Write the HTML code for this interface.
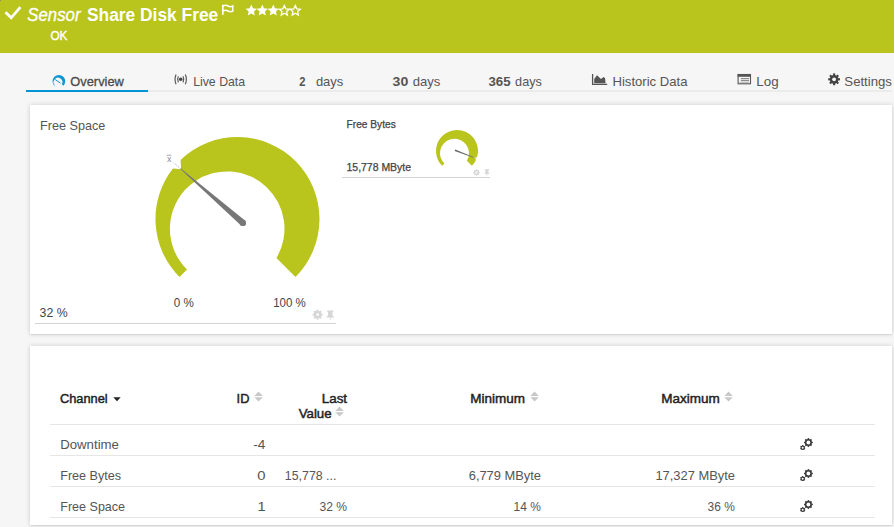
<!DOCTYPE html>
<html><head><meta charset="utf-8"><style>
html,body{margin:0;padding:0;}
body{width:894px;height:527px;overflow:hidden;position:relative;background:#f6f6f6;font-family:"Liberation Sans",sans-serif;}
.t{position:absolute;white-space:nowrap;}
.card{position:absolute;background:#fff;box-shadow:0 0 5px rgba(0,0,0,0.17),0 1px 1px rgba(0,0,0,0.06);}
</style></head><body>
<div style="position:absolute;left:0;top:0;width:894px;height:53px;background:#b9c41c"></div>
<div style="position:absolute;left:0;top:0;width:1px;height:1px;background:#8a8f70"></div>
<svg style="position:absolute;left:0;top:0" width="40" height="30"><path d="M6.5 13.2 L11.2 17.8 L19.5 8.2" fill="none" stroke="#fff" stroke-width="2.8" stroke-linecap="square"/></svg>
<div class="t" style="top:5.76px;font-size:18.00px;line-height:18.00px;left:27px;transform:translateX(0.32px) scaleX(0.9330);transform-origin:0 0;color:#fff;font-style:italic;-webkit-text-stroke:0.3px #fff;">Sensor</div>
<div class="t" style="top:5.76px;font-size:18.00px;line-height:18.00px;left:86px;transform:translateX(0.95px) scaleX(0.9647);transform-origin:0 0;color:#fff;font-weight:bold;">Share Disk Free</div>
<div class="t" style="top:29.82px;font-size:12.50px;line-height:12.50px;left:50px;transform:translateX(0.40px) scaleX(0.9429);transform-origin:0 0;color:#fff;-webkit-text-stroke:0.4px #fff;">OK</div>
<svg style="position:absolute;left:220px;top:3px" width="16" height="14"><path d="M2.8 1.8 V11.8" stroke="#fff" stroke-width="1.7"/><path d="M3 3 Q5.5 1.6 8 3 T12.8 3 V8 Q10.3 9.4 8 8 T3 8" fill="none" stroke="#fff" stroke-width="1.5"/></svg>
<svg style="position:absolute;left:244px;top:2px" width="60" height="16"><polygon points="7.30,2.60 8.95,6.33 13.01,6.75 9.96,9.47 10.83,13.45 7.30,11.40 3.77,13.45 4.64,9.47 1.59,6.75 5.65,6.33" fill="#fff"/><polygon points="18.30,2.60 19.95,6.33 24.01,6.75 20.96,9.47 21.83,13.45 18.30,11.40 14.77,13.45 15.64,9.47 12.59,6.75 16.65,6.33" fill="#fff"/><polygon points="29.30,2.60 30.95,6.33 35.01,6.75 31.96,9.47 32.83,13.45 29.30,11.40 25.77,13.45 26.64,9.47 23.59,6.75 27.65,6.33" fill="#fff"/><polygon points="40.30,3.50 41.77,6.78 45.34,7.16 42.68,9.57 43.42,13.09 40.30,11.30 37.18,13.09 37.92,9.57 35.26,7.16 38.83,6.78" fill="none" stroke="#fff" stroke-width="1.3" stroke-linejoin="miter"/><polygon points="51.30,3.50 52.77,6.78 56.34,7.16 53.68,9.57 54.42,13.09 51.30,11.30 48.18,13.09 48.92,9.57 46.26,7.16 49.83,6.78" fill="none" stroke="#fff" stroke-width="1.3" stroke-linejoin="miter"/></svg>
<div style="position:absolute;left:26px;top:90px;width:866px;height:2px;background:#ebebeb"></div>
<div style="position:absolute;left:26px;top:90px;width:122px;height:2px;background:#0096d6"></div>
<svg style="position:absolute;left:0;top:0" width="80" height="95"><path d="M54.45 85.75 A6.30 6.30 0 1 1 63.35 85.75 L61.88 84.28 A4.40 4.40 0 1 0 54.89 85.31 Z" fill="#0d96d4"/><path d="M55.3 79.6 L60.5 83.2" stroke="#0d96d4" stroke-width="1.0"/></svg>
<div class="t" style="top:74.60px;font-size:13.00px;line-height:13.00px;left:70px;transform:translateX(0.35px) scaleX(0.9864);transform-origin:0 0;color:#4a4a4a;-webkit-text-stroke:0.3px #4a4a4a;">Overview</div>
<svg style="position:absolute;left:168px;top:70px" width="24" height="20"><circle cx="12.7" cy="9.3" r="1.8" fill="#444"/><path d="M10.4 6.2 Q8.7 9.3 10.4 12.4 M15 6.2 Q16.7 9.3 15 12.4 M8.1 4.4 Q5.9 9.3 8.1 14.2 M17.3 4.4 Q19.5 9.3 17.3 14.2" fill="none" stroke="#555" stroke-width="1.15"/></svg>
<div class="t" style="top:74.60px;font-size:13.00px;line-height:13.00px;left:193px;transform:translateX(0.13px) scaleX(0.9467);transform-origin:0 0;color:#555;">Live Data</div>
<div class="t" style="top:74.60px;font-size:13.00px;line-height:13.00px;left:299px;transform:translateX(0.17px) scaleX(0.8639);transform-origin:0 0;color:#555;font-weight:bold;">2</div>
<div class="t" style="top:74.60px;font-size:13.00px;line-height:13.00px;left:315px;transform:translateX(0.89px) scaleX(0.9984);transform-origin:0 0;color:#555;">days</div>
<div class="t" style="top:74.60px;font-size:13.00px;line-height:13.00px;left:392px;transform:translateX(0.58px) scaleX(1.0832);transform-origin:0 0;color:#555;font-weight:bold;">30</div>
<div class="t" style="top:74.60px;font-size:13.00px;line-height:13.00px;left:412px;transform:translateX(0.69px) scaleX(1.0060);transform-origin:0 0;color:#555;">days</div>
<div class="t" style="top:74.60px;font-size:13.00px;line-height:13.00px;left:488px;transform:translateX(0.42px) scaleX(1.0217);transform-origin:0 0;color:#555;font-weight:bold;">365</div>
<div class="t" style="top:74.60px;font-size:13.00px;line-height:13.00px;left:515px;transform:translateX(0.11px) scaleX(0.9721);transform-origin:0 0;color:#555;">days</div>
<svg style="position:absolute;left:590px;top:73px" width="18" height="14"><path d="M2.6 1 V11.4 H17.2" fill="none" stroke="#555" stroke-width="1.3"/><path d="M4.2 10.2 V6 L7 2.2 L11 6 L13.5 4 L15 5 L15.6 10.2 Z" fill="#555"/></svg>
<div class="t" style="top:74.60px;font-size:13.00px;line-height:13.00px;left:612px;transform:translateX(0.48px) scaleX(1.0073);transform-origin:0 0;color:#555;">Historic Data</div>
<svg style="position:absolute;left:736px;top:73px" width="16" height="13"><rect x="2.1" y="1.5" width="12.4" height="9.3" fill="none" stroke="#555" stroke-width="1.1"/><rect x="1.6" y="1" width="13.4" height="2.8" fill="#555"/><path d="M4.8 5.7 H13 M4.8 7.7 H13" stroke="#666" stroke-width="0.9"/><path d="M3.5 9.5 H13" stroke="#bbb" stroke-width="0.9"/></svg>
<div class="t" style="top:74.60px;font-size:13.00px;line-height:13.00px;left:756px;transform:translateX(0.26px) scaleX(1.0297);transform-origin:0 0;color:#555;">Log</div>
<svg style="position:absolute;left:826px;top:72px" width="16" height="16"><circle cx="8.10" cy="7.30" r="4.40" fill="#444"/><rect x="7.04" y="1.40" width="2.12" height="11.80" fill="#444" transform="rotate(0.0 8.10 7.30)"/><rect x="7.04" y="1.40" width="2.12" height="11.80" fill="#444" transform="rotate(45.0 8.10 7.30)"/><rect x="7.04" y="1.40" width="2.12" height="11.80" fill="#444" transform="rotate(90.0 8.10 7.30)"/><rect x="7.04" y="1.40" width="2.12" height="11.80" fill="#444" transform="rotate(135.0 8.10 7.30)"/><circle cx="8.10" cy="7.30" r="1.90" fill="#f6f6f6"/></svg>
<div class="t" style="top:74.60px;font-size:13.00px;line-height:13.00px;left:844px;transform:translateX(0.34px) scaleX(1.0135);transform-origin:0 0;color:#555;">Settings</div>
<div class="card" style="left:30px;top:105px;width:862px;height:229px"></div>
<div class="t" style="top:119.20px;font-size:13.00px;line-height:13.00px;left:40px;transform:translateX(0.01px) scaleX(0.9714);transform-origin:0 0;color:#555;">Free Space</div>
<svg style="position:absolute;left:0;top:0" width="894" height="527"><path d="M179.52 276.98 A82.00 82.00 0 0 1 172.93 168.45 L181.03 169.22 L194.85 181.40 A57.30 57.30 0 0 0 186.98 269.52 Z" fill="#b9c41c"/><path d="M180.61 159.94 A82.00 82.00 0 0 1 295.48 276.98 L276.46 257.96 A57.30 57.30 0 0 0 194.85 181.40 L181.03 169.22 Z" fill="#b9c41c"/><path d="M180.91 169.11 L173.50 162.50" stroke="#999" stroke-width="0.8" stroke-dasharray="1.2 1.2"/><path d="M180.37 169.06 L240.80 225.32 L245.00 220.48 L180.83 168.54 Z" fill="#777"/><circle cx="242.90" cy="222.90" r="3.20" fill="#777"/><text x="166.9" y="162.2" font-size="9" fill="#8a8a9a" font-family="Liberation Sans">x</text><path d="M166.6 155.2 H171.4" stroke="#a0a0a8" stroke-width="0.9"/><path d="M442.15 165.85 A21.00 21.00 0 1 1 477.15 156.91 L475.01 157.87 L468.82 155.50 A14.50 14.50 0 1 0 444.40 163.60 Z" fill="#b9c41c"/><path d="M475.97 160.00 A21.00 21.00 0 0 1 471.85 165.85 L466.83 160.83 A14.50 14.50 0 0 0 468.82 155.50 L475.01 157.87 Z" fill="#b9c41c"/><path d="M473.77 157.71 L473.98 157.15 L455.21 149.52 L454.68 150.92 Z" fill="#666"/><path d="M473.88 157.43 L477.02 158.63" stroke="#aaa" stroke-width="0.6" stroke-dasharray="0.8 0.8"/></svg>
<div class="t" style="top:305.90px;font-size:13.00px;line-height:13.00px;left:39px;transform:translateX(0.60px) scaleX(0.9455);transform-origin:0 0;color:#444;">32 %</div>
<div class="t" style="top:296.64px;font-size:12.00px;line-height:12.00px;left:173px;transform:translateX(0.78px) scaleX(0.9707);transform-origin:0 0;color:#444;">0 %</div>
<div class="t" style="top:296.64px;font-size:12.00px;line-height:12.00px;left:273px;transform:translateX(0.18px) scaleX(0.9591);transform-origin:0 0;color:#444;">100 %</div>
<div style="position:absolute;left:35px;top:323px;width:301px;height:1px;background:#d4d4d4"></div>
<svg style="position:absolute;left:311px;top:308px" width="14" height="14"><circle cx="6.60" cy="6.60" r="3.90" fill="#d6d6d6"/><rect x="5.65" y="1.60" width="1.90" height="10.00" fill="#d6d6d6" transform="rotate(0.0 6.60 6.60)"/><rect x="5.65" y="1.60" width="1.90" height="10.00" fill="#d6d6d6" transform="rotate(45.0 6.60 6.60)"/><rect x="5.65" y="1.60" width="1.90" height="10.00" fill="#d6d6d6" transform="rotate(90.0 6.60 6.60)"/><rect x="5.65" y="1.60" width="1.90" height="10.00" fill="#d6d6d6" transform="rotate(135.0 6.60 6.60)"/><circle cx="6.60" cy="6.60" r="1.30" fill="#fff"/></svg>
<svg style="position:absolute;left:325.60px;top:309.60px" width="8.50" height="10.20" viewBox="0 0 10 12"><path d="M1.3 0.6 H8.7 V2.2 H7.6 V6.4 L9.4 7.9 V8.7 H0.6 V7.9 L2.4 6.4 V2.2 H1.3 Z M4.4 8.7 H5.6 L5.3 12 H4.7 Z" fill="#d6d6d6"/></svg>
<div class="t" style="top:119.53px;font-size:10.00px;line-height:10.00px;left:346px;transform:translateX(0.59px) scaleX(1.0167);transform-origin:0 0;color:#444;-webkit-text-stroke:0.25px #444;">Free Bytes</div>
<div class="t" style="top:163.13px;font-size:10.00px;line-height:10.00px;left:346px;transform:translateX(0.53px) scaleX(1.0447);transform-origin:0 0;color:#444;-webkit-text-stroke:0.25px #444;">15,778 MByte</div>
<div style="position:absolute;left:342px;top:177px;width:148px;height:1px;background:#d4d4d4"></div>
<svg style="position:absolute;left:471.5px;top:168px" width="10" height="9"><circle cx="4.50" cy="4.50" r="2.50" fill="#d8d8d8"/><rect x="3.91" y="1.20" width="1.19" height="6.60" fill="#d8d8d8" transform="rotate(0.0 4.50 4.50)"/><rect x="3.91" y="1.20" width="1.19" height="6.60" fill="#d8d8d8" transform="rotate(45.0 4.50 4.50)"/><rect x="3.91" y="1.20" width="1.19" height="6.60" fill="#d8d8d8" transform="rotate(90.0 4.50 4.50)"/><rect x="3.91" y="1.20" width="1.19" height="6.60" fill="#d8d8d8" transform="rotate(135.0 4.50 4.50)"/><circle cx="4.50" cy="4.50" r="1.10" fill="#fff"/></svg>
<svg style="position:absolute;left:483.80px;top:169.00px" width="5.80" height="6.96" viewBox="0 0 10 12"><path d="M1.3 0.6 H8.7 V2.2 H7.6 V6.4 L9.4 7.9 V8.7 H0.6 V7.9 L2.4 6.4 V2.2 H1.3 Z M4.4 8.7 H5.6 L5.3 12 H4.7 Z" fill="#d6d6d6"/></svg>
<div class="card" style="left:30px;top:346px;width:862px;height:179px"></div>
<div class="t" style="top:391.90px;font-size:13.00px;line-height:13.00px;left:59px;transform:translateX(0.92px) scaleX(0.9852);transform-origin:0 0;color:#222;-webkit-text-stroke:0.45px #222;">Channel</div>
<svg style="position:absolute;left:112px;top:396px" width="10" height="7"><path d="M1.3 1.3 H8.7 L5 5.2 Z" fill="#222"/></svg>
<div class="t" style="top:392.20px;font-size:13.00px;line-height:13.00px;left:236px;transform:translateX(0.62px) scaleX(0.9860);transform-origin:0 0;color:#222;-webkit-text-stroke:0.45px #222;">ID</div>
<svg style="position:absolute;left:253.80px;top:391.00px" width="10" height="12"><path d="M0.3 4.9 L4.55 0.6 L8.8 4.9 Z M0.3 6.3 H8.8 L4.55 10.6 Z" fill="#c8c8c8"/></svg>
<div class="t" style="top:392.20px;font-size:13.00px;line-height:13.00px;left:321px;transform:translateX(0.76px) scaleX(1.0305);transform-origin:0 0;color:#222;-webkit-text-stroke:0.45px #222;">Last</div>
<div class="t" style="top:406.90px;font-size:13.00px;line-height:13.00px;left:298px;transform:translateX(0.64px) scaleX(1.0210);transform-origin:0 0;color:#222;-webkit-text-stroke:0.45px #222;">Value</div>
<svg style="position:absolute;left:335.40px;top:406.00px" width="10" height="12"><path d="M0.3 4.9 L4.55 0.6 L8.8 4.9 Z M0.3 6.3 H8.8 L4.55 10.6 Z" fill="#c8c8c8"/></svg>
<div class="t" style="top:392.20px;font-size:13.00px;line-height:13.00px;left:470px;transform:translateX(0.25px) scaleX(1.0383);transform-origin:0 0;color:#222;-webkit-text-stroke:0.45px #222;">Minimum</div>
<svg style="position:absolute;left:530.00px;top:391.00px" width="10" height="12"><path d="M0.3 4.9 L4.55 0.6 L8.8 4.9 Z M0.3 6.3 H8.8 L4.55 10.6 Z" fill="#c8c8c8"/></svg>
<div class="t" style="top:392.20px;font-size:13.00px;line-height:13.00px;left:661px;transform:translateX(0.15px) scaleX(1.0399);transform-origin:0 0;color:#222;-webkit-text-stroke:0.45px #222;">Maximum</div>
<svg style="position:absolute;left:723.90px;top:391.00px" width="10" height="12"><path d="M0.3 4.9 L4.55 0.6 L8.8 4.9 Z M0.3 6.3 H8.8 L4.55 10.6 Z" fill="#c8c8c8"/></svg>
<div style="position:absolute;left:50px;top:424px;width:825px;height:1px;background:#e6e6e6"></div>
<div style="position:absolute;left:50px;top:455px;width:825px;height:1px;background:#e6e6e6"></div>
<div style="position:absolute;left:50px;top:486px;width:825px;height:1px;background:#e6e6e6"></div>
<div style="position:absolute;left:50px;top:517px;width:825px;height:1px;background:#e6e6e6"></div>
<div class="t" style="top:438.10px;font-size:13.00px;line-height:13.00px;left:60px;transform:translateX(0.17px) scaleX(1.0170);transform-origin:0 0;color:#555;">Downtime</div>
<div class="t" style="top:438.10px;font-size:13.00px;line-height:13.00px;left:253px;transform:translateX(0.34px) scaleX(1.0460);transform-origin:0 0;color:#555;">-4</div>
<svg style="position:absolute;left:798px;top:436px" width="16" height="14"><circle cx="10.40" cy="6.50" r="3.50" fill="#3a3a3a"/><rect x="9.65" y="2.10" width="1.50" height="8.80" fill="#3a3a3a" transform="rotate(0.0 10.40 6.50)"/><rect x="9.65" y="2.10" width="1.50" height="8.80" fill="#3a3a3a" transform="rotate(45.0 10.40 6.50)"/><rect x="9.65" y="2.10" width="1.50" height="8.80" fill="#3a3a3a" transform="rotate(90.0 10.40 6.50)"/><rect x="9.65" y="2.10" width="1.50" height="8.80" fill="#3a3a3a" transform="rotate(135.0 10.40 6.50)"/><circle cx="10.40" cy="6.50" r="1.90" fill="#fff"/><circle cx="4.70" cy="11.70" r="2.20" fill="#3a3a3a"/><rect x="4.20" y="9.00" width="1.00" height="5.40" fill="#3a3a3a" transform="rotate(0.0 4.70 11.70)"/><rect x="4.20" y="9.00" width="1.00" height="5.40" fill="#3a3a3a" transform="rotate(60.0 4.70 11.70)"/><rect x="4.20" y="9.00" width="1.00" height="5.40" fill="#3a3a3a" transform="rotate(120.0 4.70 11.70)"/><circle cx="4.70" cy="11.70" r="1.00" fill="#fff"/></svg>
<div class="t" style="top:469.00px;font-size:13.00px;line-height:13.00px;left:60px;transform:translateX(0.21px) scaleX(0.9689);transform-origin:0 0;color:#555;">Free Bytes</div>
<div class="t" style="top:469.00px;font-size:13.00px;line-height:13.00px;left:257px;transform:translateX(0.34px) scaleX(1.1420);transform-origin:0 0;color:#555;">0</div>
<div class="t" style="top:469.00px;font-size:13.00px;line-height:13.00px;left:284px;transform:translateX(0.86px) scaleX(0.9492);transform-origin:0 0;color:#555;">15,778 ...</div>
<div class="t" style="top:469.00px;font-size:13.00px;line-height:13.00px;left:468px;transform:translateX(0.72px) scaleX(0.9907);transform-origin:0 0;color:#555;">6,779 MByte</div>
<div class="t" style="top:469.00px;font-size:13.00px;line-height:13.00px;left:655px;transform:translateX(0.42px) scaleX(0.9923);transform-origin:0 0;color:#555;">17,327 MByte</div>
<svg style="position:absolute;left:798px;top:467px" width="16" height="14"><circle cx="10.40" cy="6.50" r="3.50" fill="#3a3a3a"/><rect x="9.65" y="2.10" width="1.50" height="8.80" fill="#3a3a3a" transform="rotate(0.0 10.40 6.50)"/><rect x="9.65" y="2.10" width="1.50" height="8.80" fill="#3a3a3a" transform="rotate(45.0 10.40 6.50)"/><rect x="9.65" y="2.10" width="1.50" height="8.80" fill="#3a3a3a" transform="rotate(90.0 10.40 6.50)"/><rect x="9.65" y="2.10" width="1.50" height="8.80" fill="#3a3a3a" transform="rotate(135.0 10.40 6.50)"/><circle cx="10.40" cy="6.50" r="1.90" fill="#fff"/><circle cx="4.70" cy="11.70" r="2.20" fill="#3a3a3a"/><rect x="4.20" y="9.00" width="1.00" height="5.40" fill="#3a3a3a" transform="rotate(0.0 4.70 11.70)"/><rect x="4.20" y="9.00" width="1.00" height="5.40" fill="#3a3a3a" transform="rotate(60.0 4.70 11.70)"/><rect x="4.20" y="9.00" width="1.00" height="5.40" fill="#3a3a3a" transform="rotate(120.0 4.70 11.70)"/><circle cx="4.70" cy="11.70" r="1.00" fill="#fff"/></svg>
<div class="t" style="top:499.80px;font-size:13.00px;line-height:13.00px;left:60px;transform:translateX(0.22px) scaleX(0.9653);transform-origin:0 0;color:#555;">Free Space</div>
<div class="t" style="top:499.80px;font-size:13.00px;line-height:13.00px;left:257px;transform:translateX(0.50px) scaleX(1.1253);transform-origin:0 0;color:#555;">1</div>
<div class="t" style="top:499.80px;font-size:13.00px;line-height:13.00px;left:319px;transform:translateX(0.51px) scaleX(0.9314);transform-origin:0 0;color:#555;">32 %</div>
<div class="t" style="top:499.80px;font-size:13.00px;line-height:13.00px;left:513px;transform:translateX(0.58px) scaleX(0.9222);transform-origin:0 0;color:#555;">14 %</div>
<div class="t" style="top:499.80px;font-size:13.00px;line-height:13.00px;left:707px;transform:translateX(0.62px) scaleX(0.9209);transform-origin:0 0;color:#555;">36 %</div>
<svg style="position:absolute;left:798px;top:498px" width="16" height="14"><circle cx="10.40" cy="6.50" r="3.50" fill="#3a3a3a"/><rect x="9.65" y="2.10" width="1.50" height="8.80" fill="#3a3a3a" transform="rotate(0.0 10.40 6.50)"/><rect x="9.65" y="2.10" width="1.50" height="8.80" fill="#3a3a3a" transform="rotate(45.0 10.40 6.50)"/><rect x="9.65" y="2.10" width="1.50" height="8.80" fill="#3a3a3a" transform="rotate(90.0 10.40 6.50)"/><rect x="9.65" y="2.10" width="1.50" height="8.80" fill="#3a3a3a" transform="rotate(135.0 10.40 6.50)"/><circle cx="10.40" cy="6.50" r="1.90" fill="#fff"/><circle cx="4.70" cy="11.70" r="2.20" fill="#3a3a3a"/><rect x="4.20" y="9.00" width="1.00" height="5.40" fill="#3a3a3a" transform="rotate(0.0 4.70 11.70)"/><rect x="4.20" y="9.00" width="1.00" height="5.40" fill="#3a3a3a" transform="rotate(60.0 4.70 11.70)"/><rect x="4.20" y="9.00" width="1.00" height="5.40" fill="#3a3a3a" transform="rotate(120.0 4.70 11.70)"/><circle cx="4.70" cy="11.70" r="1.00" fill="#fff"/></svg>
</body></html>
